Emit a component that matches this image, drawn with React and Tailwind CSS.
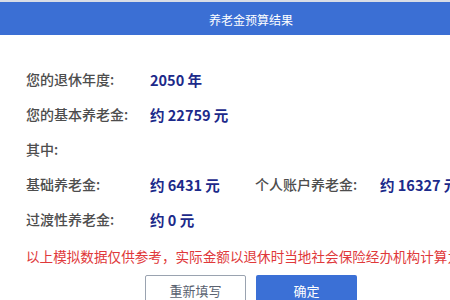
import React from 'react';

const font = { fontFamily: '"Noto Sans CJK SC", "Noto Sans", sans-serif' };

const Row = ({ label, value, label2, value2 }) => (
  <div className="flex h-[35px] items-center">
    <span className="w-[124px] shrink-0 text-[14px] font-medium text-[#4d4d4d]">{label}</span>
    {value && <span className="w-[105px] shrink-0 text-[14.5px] font-bold text-[#1c2a8a]">{value}</span>}
    {label2 && <span className="w-[125px] shrink-0 text-[14px] font-medium text-[#4d4d4d]">{label2}</span>}
    {value2 && <span className="shrink-0 whitespace-nowrap text-[14.5px] font-bold text-[#1c2a8a]">{value2}</span>}
  </div>
);

export default function App() {
  return (
    <div className="h-[300px] w-[450px] overflow-hidden bg-white" style={font}>
      <div className="h-[2px] bg-[#d8dde6]" />
      <div className="flex h-[33px] items-center bg-[#3b6fd4] pl-[209px] pt-[3px]">
        <span className="text-[12px] text-white">养老金预算结果</span>
      </div>
      <div className="pl-[26px] pt-[27px]">
        <Row label="您的退休年度:" value="2050 年" />
        <Row label="您的基本养老金:" value="约 22759 元" />
        <Row label="其中:" />
        <Row label="基础养老金:" value="约 6431 元" label2="个人账户养老金:" value2="约 16327 元" />
        <Row label="过渡性养老金:" value="约 0 元" />
        <div className="mt-[9px] whitespace-nowrap text-[13.6px] leading-[20px] text-[#e0383a]">
          以上模拟数据仅供参考，实际金额以退休时当地社会保险经办机构计算为准。
        </div>
      </div>
      <div className="mt-[9px] flex pl-[145px] gap-[10px]">
        <button className="h-[32px] w-[101px] rounded-[2px] border border-[#9aa3b0] bg-white text-[13px] text-[#5a6270]">
          重新填写
        </button>
        <button className="h-[32px] w-[101px] rounded-[2px] bg-[#3b70d6] text-[13px] text-white">
          确定
        </button>
      </div>
    </div>
  );
}
